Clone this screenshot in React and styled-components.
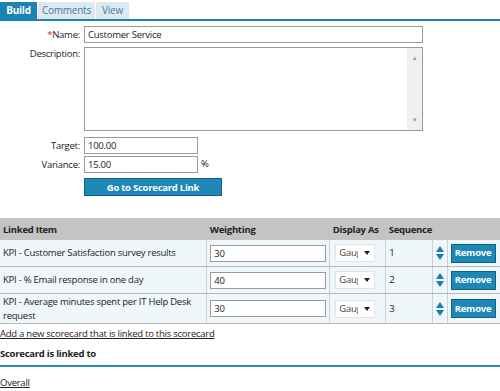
import React from 'react';
import styled, { createGlobalStyle } from 'styled-components';

const GlobalStyle = createGlobalStyle`
  body {
    margin: 0;
    background: #fff;
    font-family: "Open Sans", "Liberation Sans", sans-serif;
    font-size: 9.5px;
    letter-spacing: -0.25px;
    color: #222;
  }
  input, textarea, button {
    letter-spacing: -0.25px;
  }
`;

const Page = styled.div`
  width: 500px;
  height: 391px;
  overflow: hidden;
`;

const TabBar = styled.div`
  display: flex;
  gap: 1px;
  padding-top: 2px;
  border-bottom: 2px solid #1b83b3;
`;

const Tab = styled.div`
  width: ${p => p.$w}px;
  height: 17px;
  line-height: 17px;
  text-align: center;
  font-size: 10px;
  background: ${p => (p.$active ? '#1b83b3' : '#dfe8ee')};
  color: ${p => (p.$active ? '#fff' : '#3a7ea5')};
  font-weight: ${p => (p.$active ? 700 : 400)};
`;

const Form = styled.div`
  display: flex;
  flex-direction: column;
`;

const Row = styled.div`
  display: grid;
  grid-template-columns: 80px 1fr;
  column-gap: 4px;
  margin-top: ${p => p.$mt}px;
  align-items: start;
`;

const Label = styled.div`
  text-align: right;
  line-height: ${p => p.$lh || 17}px;
  white-space: nowrap;
`;

const Req = styled.span`
  color: #d42424;
`;

const Input = styled.input`
  box-sizing: border-box;
  width: ${p => p.$w}px;
  height: 17px;
  border: 1px solid #9a9a9a;
  padding: 0 3px;
  font: inherit;
  color: #222;
  outline: none;
`;

const Field = styled.div`
  display: flex;
  align-items: flex-start;
  gap: 3px;
  line-height: 15px;
`;

const AreaBox = styled.div`
  box-sizing: border-box;
  width: 339px;
  height: 84px;
  border: 1px solid #9a9a9a;
  display: flex;
`;

const Area = styled.textarea`
  flex: 1;
  border: none;
  resize: none;
  outline: none;
  font: inherit;
`;

const ScrollBar = styled.div`
  width: 15px;
  background: #f0f0f0;
  display: flex;
  flex-direction: column;
  justify-content: space-between;
  align-items: center;
  padding: 6px 0;
  color: #9a9a9a;
  font-size: 6px;
`;

const BlueButton = styled.button`
  box-sizing: border-box;
  height: ${p => p.$h}px;
  width: ${p => p.$w}px;
  background: #1d87b6;
  border: 1px solid #125f84;
  color: #fff;
  font: inherit;
  font-weight: 700;
  padding: 0;
  cursor: pointer;
`;

const Table = styled.table`
  margin-top: 22px;
  width: 500px;
  border-collapse: collapse;
`;

const Th = styled.th`
  background: #c4c4c4;
  height: 22px;
  text-align: left;
  padding: 0 0 0 3px;
  font-weight: 700;
  color: #222;
`;

const Td = styled.td`
  background: #f0f7fb;
  height: ${p => p.$h}px;
  padding: 0 3px;
  border-bottom: 1px solid #b8b8b8;
  border-left: ${p => (p.$first ? 'none' : '1px solid #c9d2d8')};
  line-height: 14px;
`;

const Select = styled.div`
  box-sizing: border-box;
  width: 40px;
  height: 18px;
  margin-left: 2px;
  background: #fff;
  border: 1px solid #e2e2e2;
  display: flex;
  align-items: center;
  justify-content: space-between;
  padding: 0 4px 0 3px;
  color: #444;
`;

const SelectText = styled.span`
  width: 19px;
  overflow: hidden;
  white-space: nowrap;
`;

const Caret = styled.span`
  width: 0;
  height: 0;
  border-left: 3px solid transparent;
  border-right: 3px solid transparent;
  border-top: 4px solid #222;
`;

const Arrows = styled.div`
  display: flex;
  flex-direction: column;
  align-items: center;
  gap: 2px;
`;

const Tri = styled.span`
  width: 0;
  height: 0;
  border-left: 4px solid transparent;
  border-right: 4px solid transparent;
  ${p => (p.$up ? 'border-bottom' : 'border-top')}: 6px solid #1a7fae;
`;

const Link = styled.a`
  display: block;
  color: #222;
  text-decoration: underline;
  line-height: 13px;
  margin-top: ${p => p.$mt}px;
`;

const Heading = styled.div`
  font-weight: 700;
  margin-top: 7px;
  line-height: 13px;
  padding-bottom: 5px;
  border-bottom: 2px solid #2a8ab8;
`;

const rows = [
  { name: 'KPI - Customer Satisfaction survey results', w: '30', seq: 1, h: 26 },
  { name: 'KPI - % Email response in one day', w: '40', seq: 2, h: 26 },
  { name: 'KPI - Average minutes spent per IT Help Desk request', w: '30', seq: 3, h: 29 },
];

export default function App() {
  return (
    <Page>
      <GlobalStyle />
      <TabBar>
        <Tab $active $w={37}>Build</Tab>
        <Tab $w={57}>Comments</Tab>
        <Tab $w={33}>View</Tab>
      </TabBar>
      <Form>
        <Row $mt={5}>
          <Label><Req>*</Req>Name:</Label>
          <Input $w={339} defaultValue="Customer Service" />
        </Row>
        <Row $mt={4}>
          <Label $lh={13}>Description:</Label>
          <AreaBox>
            <Area />
            <ScrollBar><span>▲</span><span>▼</span></ScrollBar>
          </AreaBox>
        </Row>
        <Row $mt={6}>
          <Label>Target:</Label>
          <Input $w={114} defaultValue="100.00" />
        </Row>
        <Row $mt={2}>
          <Label>Variance:</Label>
          <Field><Input $w={114} defaultValue="15.00" /><span>%</span></Field>
        </Row>
        <Row $mt={5}>
          <span />
          <BlueButton $w={138} $h={18}>Go to Scorecard Link</BlueButton>
        </Row>
      </Form>
      <Table>
        <colgroup>
          <col style={{ width: 210 }} />
          <col style={{ width: 121 }} />
          <col style={{ width: 56 }} />
          <col style={{ width: 45 }} />
          <col style={{ width: 15 }} />
          <col style={{ width: 53 }} />
        </colgroup>
        <thead>
          <tr>
            <Th>Linked Item</Th>
            <Th>Weighting</Th>
            <Th>Display As</Th>
            <Th>Sequence</Th>
            <Th />
            <Th />
          </tr>
        </thead>
        <tbody>
          {rows.map(r => (
            <tr key={r.seq}>
              <Td $first $h={r.h}>{r.name}</Td>
              <Td $h={r.h}><Input $w={116} defaultValue={r.w} /></Td>
              <Td $h={r.h}><Select><SelectText>Gauge</SelectText><Caret /></Select></Td>
              <Td $h={r.h}>{r.seq}</Td>
              <Td $h={r.h} style={{ padding: 0 }}><Arrows><Tri $up /><Tri /></Arrows></Td>
              <Td $h={r.h}><BlueButton $w={45} $h={19}>Remove</BlueButton></Td>
            </tr>
          ))}
        </tbody>
      </Table>
      <Link href="#" $mt={3}>Add a new scorecard that is linked to this scorecard</Link>
      <Heading>Scorecard is linked to</Heading>
      <Link href="#" $mt={9}>Overall</Link>
    </Page>
  );
}
